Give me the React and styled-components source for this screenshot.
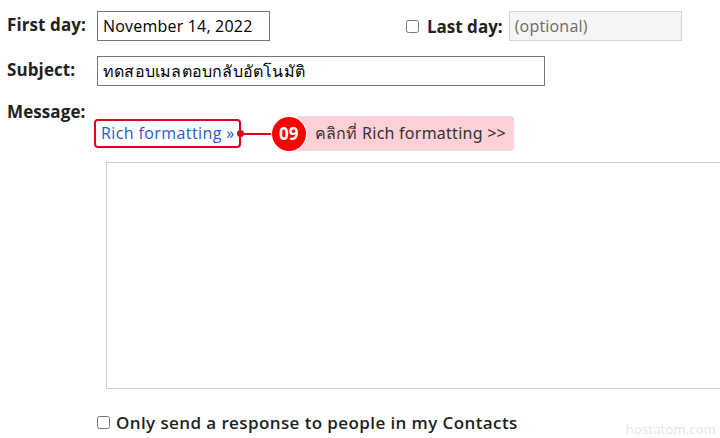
import React from "react";
import styled, { createGlobalStyle } from "styled-components";

const GlobalStyle = createGlobalStyle`
  html, body {
    margin: 0;
    background: #fff;
    font-family: "Open Sans", "Noto Sans", "DejaVu Sans", sans-serif;
    color: #202124;
  }
`;

const Page = styled.div`
  position: relative;
  width: 720px;
  height: 438px;
  overflow: hidden;
  padding: 11px 0 0 7px;
  box-sizing: border-box;
`;

const Form = styled.div`
  display: grid;
  grid-template-columns: 90px 1fr;
  row-gap: 15px;
  align-items: start;
`;

const Label = styled.div`
  font-size: 17px;
  font-weight: 700;
  color: #222;
  line-height: 28px;
  letter-spacing: 0.1px;
  margin-top: ${(p) => p.$top || 0}px;
`;

const Row = styled.div`
  display: flex;
  align-items: center;
`;

const Input = styled.div`
  box-sizing: border-box;
  width: ${(p) => p.$width}px;
  height: 30px;
  padding: 0 5px;
  border: 1px solid ${(p) => (p.$muted ? "#d6d6d6" : "#767676")};
  background: ${(p) => (p.$muted ? "#f5f5f5" : "#fff")};
  color: ${(p) => (p.$muted ? "#6b6b6b" : "#000")};
  font-size: 16px;
  font-weight: 400;
  line-height: 28px;
  letter-spacing: 0.2px;
  white-space: nowrap;
`;

const Check = styled.input.attrs({ type: "checkbox" })`
  width: 13px;
  height: 13px;
  margin: 0 ${(p) => p.$gap || 6}px 0 0;
`;

const LastDay = styled.label`
  display: flex;
  align-items: center;
  margin-left: 136px;
  font-size: 17px;
  font-weight: 700;
  color: #222;
  span {
    margin-right: 6px;
  }
`;

const MessageArea = styled.div`
  padding-top: 15px;
`;

const Annot = styled.div`
  display: flex;
  align-items: center;
  margin-left: -3px;
`;

const RichBox = styled.div`
  position: relative;
  box-sizing: border-box;
  height: 29px;
  padding: 0 4px 0 5px;
  border: 2px solid #e3001b;
  border-radius: 4px;
  color: #2b57d6;
  font-size: 16px;
  line-height: 25px;
  letter-spacing: 0.4px;
  white-space: nowrap;
  &::after {
    content: "";
    position: absolute;
    right: -5px;
    top: 9px;
    width: 7px;
    height: 7px;
    border-radius: 50%;
    background: #e3001b;
  }
`;

const Connector = styled.div`
  width: 31px;
  height: 2px;
  background: #e3001b;
`;

const Step = styled.div`
  position: relative;
  z-index: 1;
  width: 34px;
  height: 34px;
  border-radius: 50%;
  background: #f00;
  color: #fff;
  font-weight: 700;
  font-size: 17px;
  display: flex;
  align-items: center;
  justify-content: center;
  box-shadow: 0 0 0 1px #fff;
`;

const Bubble = styled.div`
  margin-left: -8px;
  height: 35px;
  padding: 0 8px 0 17px;
  background: #ffd0d6;
  border-radius: 0 4px 4px 0;
  color: #333;
  font-size: 16px;
  line-height: 35px;
  letter-spacing: 0.25px;
  font-family: "Noto Sans", "DejaVu Sans", sans-serif;
  white-space: nowrap;
`;

const TextArea = styled.div`
  margin: 11px 0 0 9px;
  height: 227px;
  border: 1px solid #cfcfcf;
  border-right: none;
  box-sizing: border-box;
`;

const Contacts = styled.label`
  display: flex;
  align-items: center;
  margin: 22px 0 0 90px;
  font-size: 17px;
  font-weight: 600;
  letter-spacing: 0.4px;
  color: #1f1f1f;
`;

const Watermark = styled.div`
  position: absolute;
  right: 4px;
  bottom: 0;
  font-family: "Open Sans", sans-serif;
  font-size: 13px;
  color: #e4e4e4;
  letter-spacing: 0.2px;
`;

export default function App() {
  return (
    <Page>
      <GlobalStyle />
      <Form>
        <Label>First day:</Label>
        <Row>
          <Input $width={173}>November 14, 2022</Input>
          <LastDay>
            <Check $gap={8} />
            <span>Last day:</span>
            <Input $width={173} $muted>
              (optional)
            </Input>
          </LastDay>
        </Row>

        <Label>Subject:</Label>
        <Row>
          <Input $width={448}>ทดสอบเมลตอบกลับอัตโนมัติ</Input>
        </Row>

        <Label $top={-3}>Message:</Label>
        <MessageArea>
          <Annot>
            <RichBox>Rich formatting »</RichBox>
            <Connector />
            <Step>09</Step>
            <Bubble>คลิกที่ Rich formatting &gt;&gt;</Bubble>
          </Annot>
          <TextArea />
        </MessageArea>
      </Form>
      <Contacts>
        <Check />
        Only send a response to people in my Contacts
      </Contacts>
      <Watermark>hostatom.com</Watermark>
    </Page>
  );
}
